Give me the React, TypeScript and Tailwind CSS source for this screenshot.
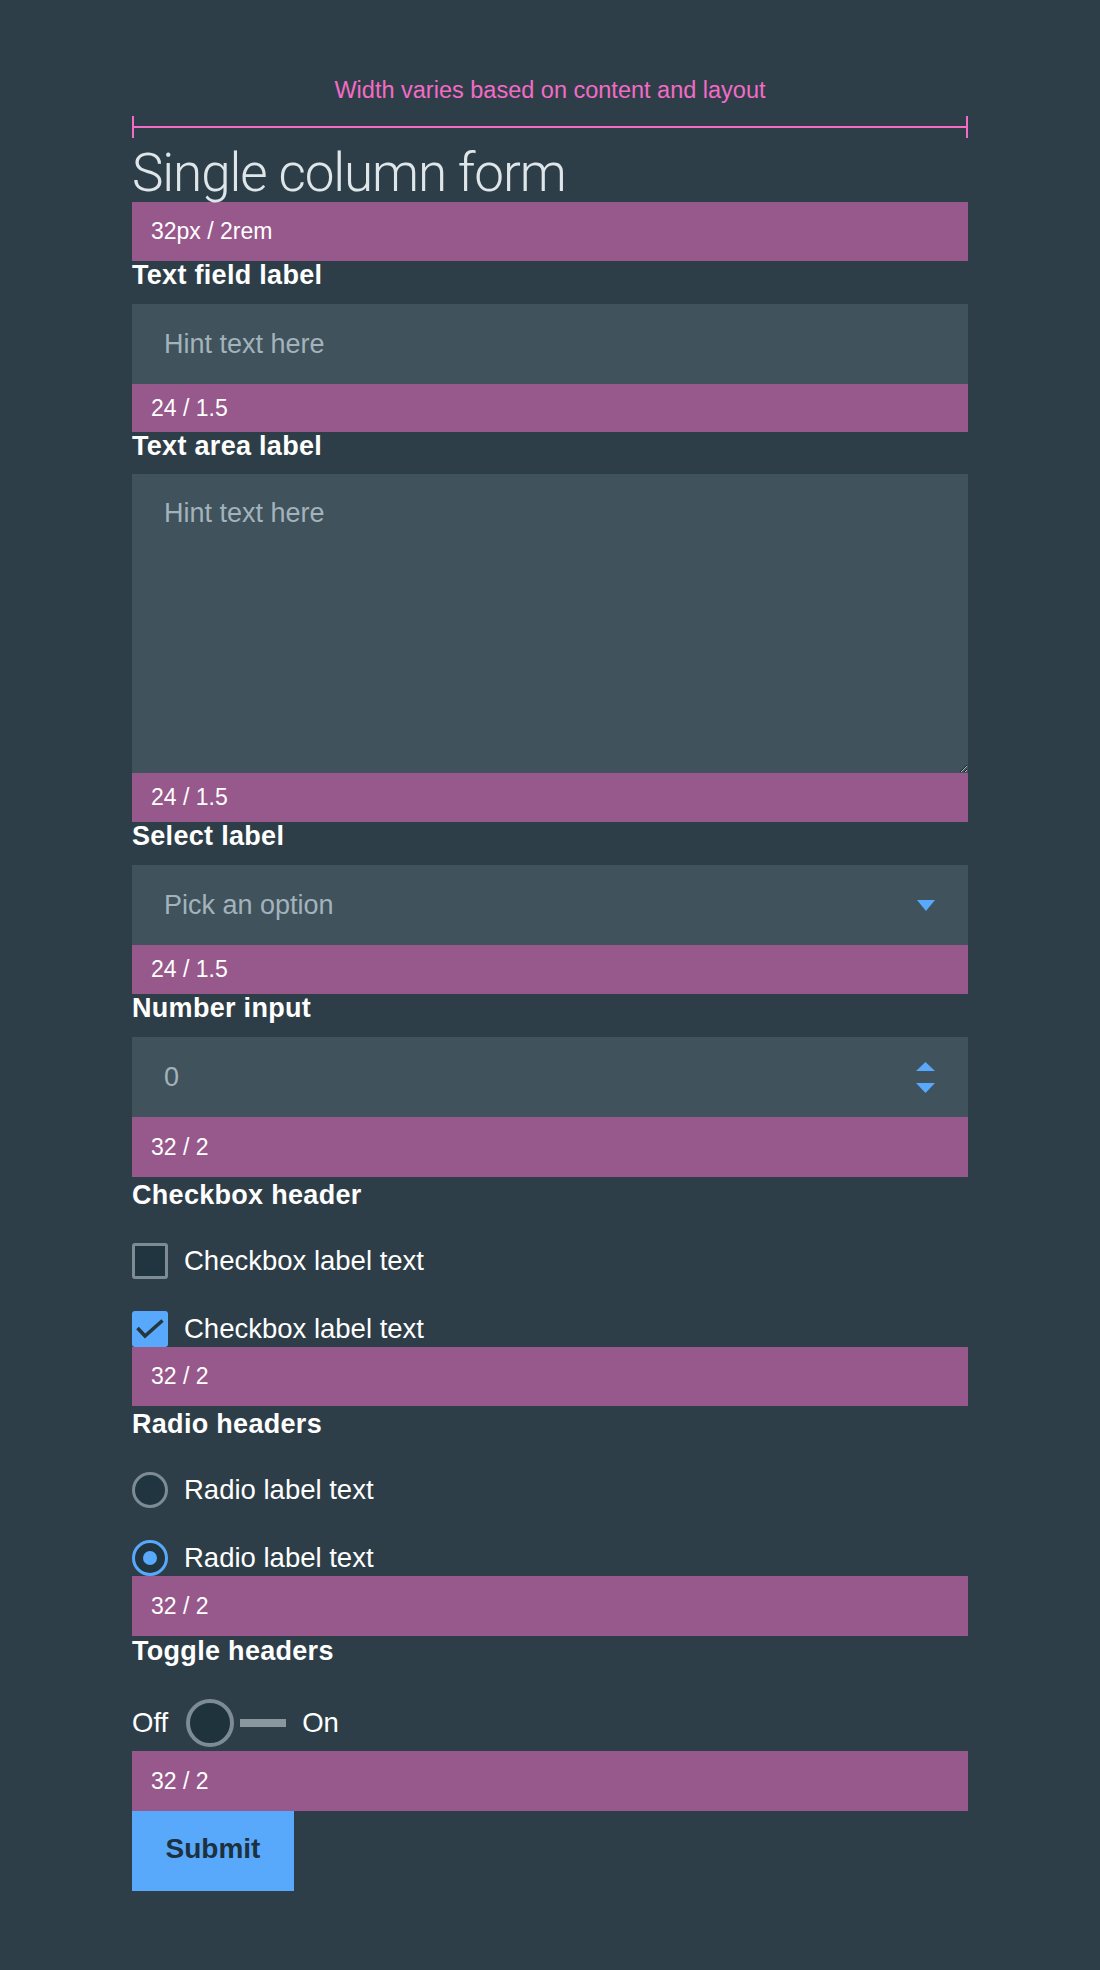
import React from "react";

const Bar = ({ text, className }: { text: string; className: string }) => (
  <div className={`flex items-center bg-[#97588b] pl-[19px] text-[23px] leading-none text-white ${className}`}>
    {text}
  </div>
);

const Label = ({ children }: { children: React.ReactNode }) => (
  <div className="mb-[15px] h-[28px] text-[27px] font-bold leading-[28px] tracking-[0.3px] text-white">{children}</div>
);

const Header = ({ children, className = "" }: { children: React.ReactNode; className?: string }) => (
  <div className={`h-[28px] text-[27px] font-bold leading-[28px] tracking-[0.3px] text-white ${className}`}>{children}</div>
);

function Checkbox({ checked, label, className }: { checked?: boolean; label: string; className: string }) {
  return (
    <div className={`flex h-[36px] items-center gap-[16px] ${className}`}>
      {checked ? (
        <div className="flex h-[36px] w-[36px] items-center justify-center rounded-[3px] bg-[#58a9fb]">
          <svg width="36" height="36" viewBox="0 0 36 36">
            <path d="M5.5 17 L13 25 L30.5 9.5" fill="none" stroke="#26363f" strokeWidth="3.6" />
          </svg>
        </div>
      ) : (
        <div className="h-[36px] w-[36px] rounded-[3px] border-[3px] border-[#7c8b94] bg-[#203540]" />
      )}
      <span className="text-[27.5px] leading-[36px] text-white">{label}</span>
    </div>
  );
}

function Radio({ checked, label, className }: { checked?: boolean; label: string; className: string }) {
  return (
    <div className={`flex h-[36px] items-center gap-[16px] ${className}`}>
      {checked ? (
        <div className="flex h-[36px] w-[36px] items-center justify-center rounded-full border-[3px] border-[#58a9fb] bg-[#203540]">
          <div className="h-[14px] w-[14px] rounded-full bg-[#58a9fb]" />
        </div>
      ) : (
        <div className="h-[36px] w-[36px] rounded-full border-[3px] border-[#7c8b94] bg-[#203540]" />
      )}
      <span className="text-[27.5px] leading-[36px] text-white">{label}</span>
    </div>
  );
}

export default function App() {
  return (
    <div className="min-h-[1970px] w-full bg-[#2e3e48] font-['Liberation_Sans',Arial,sans-serif]">
      <div className="ml-[132px] w-[836px] pt-[78px]">
        {/* width annotation */}
        <div className="text-center text-[23.5px] leading-[24px] text-[#f36bc6]">
          Width varies based on content and layout
        </div>
        <div className="mt-[14px] flex h-[22px] items-center">
          <div className="h-full w-[2px] bg-[#f36bc6]" />
          <div className="h-[2px] flex-1 bg-[#f36bc6]" />
          <div className="h-full w-[2px] bg-[#f36bc6]" />
        </div>

        <h1 className="mt-[7px] h-[57px] font-['Roboto',sans-serif] text-[53px] font-light leading-[57px] tracking-[-1.1px] text-[#dfe6ea]">
          Single column form
        </h1>
        <Bar text="32px / 2rem" className="h-[59px]" />

        <Label>Text field label</Label>
        <input
          className="block h-[80px] w-full bg-[#40525b] pl-[32px] text-[27px] text-[#a3b3bc] outline-none placeholder:text-[#a3b3bc]"
          placeholder="Hint text here"
          readOnly
        />
        <Bar text="24 / 1.5" className="h-[48px]" />

        <Label>Text area label</Label>
        <textarea
          className="-mt-[1px] block h-[299px] w-full bg-[#40525b] pl-[32px] pt-[25px] text-[27px] leading-[28px] text-[#a3b3bc] outline-none placeholder:text-[#a3b3bc]"
          placeholder="Hint text here"
          readOnly
        />
        <Bar text="24 / 1.5" className="h-[49px]" />

        <Label>Select label</Label>
        <div className="flex h-[80px] items-center justify-between bg-[#40525b] pl-[32px] pr-[33px] text-[27px] text-[#a3b3bc]">
          <span>Pick an option</span>
          <svg width="18" height="11" viewBox="0 0 18 11">
            <path d="M0 0 H18 L9 11 Z" fill="#58a9fb" />
          </svg>
        </div>
        <Bar text="24 / 1.5" className="h-[49px]" />

        <Label>Number input</Label>
        <div className="flex h-[80px] items-center justify-between bg-[#40525b] pl-[32px] pr-[33px] text-[27px] text-[#a3b3bc]">
          <span>0</span>
          <svg width="19" height="31" viewBox="0 0 19 31">
            <path d="M0 9 L9.5 0 L19 9 Z" fill="#58a9fb" />
            <path d="M0 21 H19 L9.5 31 Z" fill="#58a9fb" />
          </svg>
        </div>
        <Bar text="32 / 2" className="h-[60px]" />

        <Header className="mt-[4px]">Checkbox header</Header>
        <Checkbox label="Checkbox label text" className="mt-[34px]" />
        <Checkbox checked label="Checkbox label text" className="mt-[32px]" />
        <Bar text="32 / 2" className="h-[59px]" />

        <Header className="mt-[4px]">Radio headers</Header>
        <Radio label="Radio label text" className="mt-[34px]" />
        <Radio checked label="Radio label text" className="mt-[32px]" />
        <Bar text="32 / 2" className="h-[60px]" />

        <Header className="mt-[1px]">Toggle headers</Header>
        <div className="mt-[34px] flex h-[48px] items-center text-[27.5px] text-white">
          <span>Off</span>
          <div className="ml-[18px] h-[48px] w-[48px] rounded-full border-[4px] border-[#7c8b94] bg-[#1f333d]" />
          <div className="ml-[6px] h-[8px] w-[46px] bg-[#8a979f]" />
          <span className="ml-[16px]">On</span>
        </div>
        <Bar text="32 / 2" className="mt-[4px] h-[60px]" />

        <button className="block h-[80px] w-[162px] bg-[#58a9fb] pb-[4px] text-[28px] font-bold text-[#1d3140]">
          Submit
        </button>
      </div>
    </div>
  );
}
